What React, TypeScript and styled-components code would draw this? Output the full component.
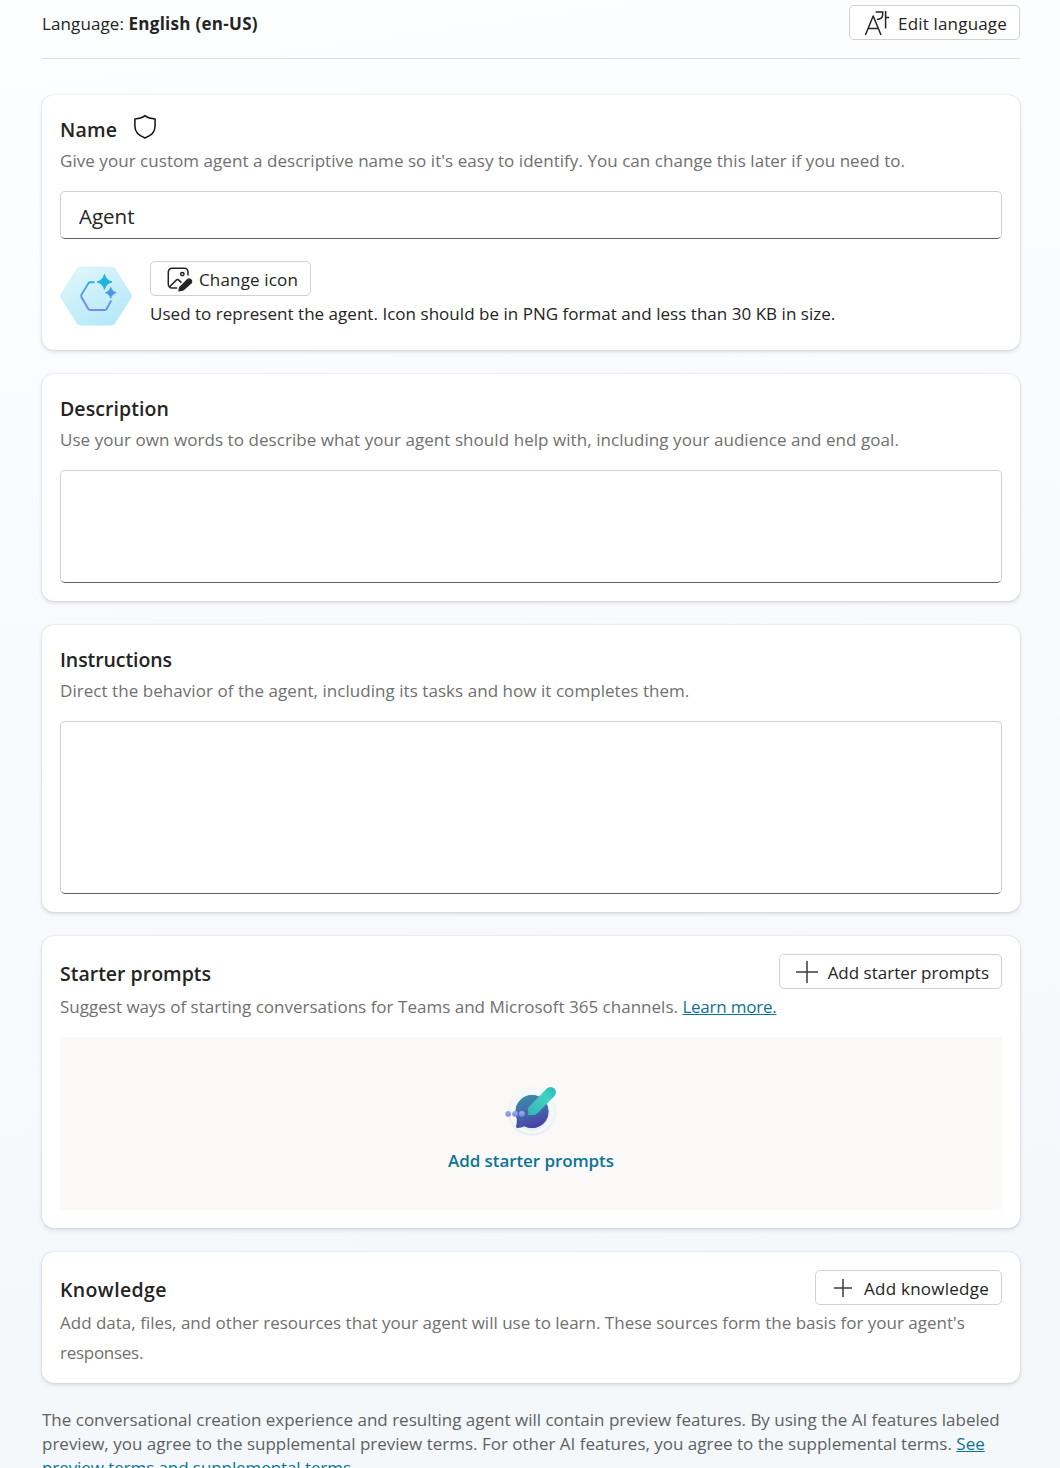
import React from "react";
import styled, { createGlobalStyle } from "styled-components";

const GlobalStyle = createGlobalStyle`
  *, *::before, *::after { box-sizing: border-box; }
  html, body { margin: 0; padding: 0; }
  body { overflow: hidden; }
`;

const Page = styled.main`
  height: 1468px;
  overflow: hidden;
  padding: 0 40px 0 42px;
  display: flex;
  flex-direction: column;
  background: linear-gradient(172deg, #fdfeff 0%, #fafbfe 30%, #f8f9fd 62%, #f4f8fb 85%, #f4f8fb 100%);
  color: #242424;
  font-family: "Open Sans", "Noto Sans", sans-serif;
  font-size: 17px;
`;

const LanguageBar = styled.header`
  flex: none;
  display: flex;
  justify-content: space-between;
  align-items: flex-start;
  height: 59px;
  padding-top: 5px;
  border-bottom: 1px solid #dcdde0;
`;

const LanguageLabel = styled.div`
  line-height: 38px;
  letter-spacing: 0.1px;
  white-space: pre;
`;

const Strong = styled.b`
  font-weight: 700;
  letter-spacing: 0.28px;
`;

const Button = styled.button<{ $padLeft: number; $gap: number; $spacing?: number }>`
  display: inline-flex;
  align-items: center;
  flex: none;
  gap: ${(p) => p.$gap}px;
  height: 35px;
  padding: 0 12px 0 ${(p) => p.$padLeft}px;
  border: 1px solid #d1d1d1;
  border-radius: 5px;
  background: #fff;
  color: #242424;
  font: inherit;
  letter-spacing: ${(p) => p.$spacing ?? 0}px;
  white-space: nowrap;

  svg { flex: none; display: block; }
`;

const ButtonText = styled.span`
  padding-top: 2px;
  line-height: 31px;
`;

const Cards = styled.div`
  flex: none;
  display: flex;
  flex-direction: column;
  gap: 24px;
  margin-top: 36px;
`;

const Card = styled.section<{ $bottom?: number }>`
  padding: 18px 18px ${(p) => p.$bottom ?? 18}px;
  border-radius: 12px;
  background: #fff;
  box-shadow: 0 0 2px rgba(0, 0, 0, 0.14), 0 2px 4px rgba(0, 0, 0, 0.12);
`;

const TitleRow = styled.div`
  display: flex;
  align-items: flex-start;
  height: 32px;
  gap: 16px;

  > svg { margin-top: 1px; }
`;

const ActionTitleRow = styled(TitleRow)`
  height: 37px;
  justify-content: space-between;
`;

const Title = styled.h2<{ $spacing?: number; $offset?: number }>`
  margin: ${(p) => p.$offset ?? 1}px 0 0;
  font-size: 19.5px;
  font-weight: 600;
  line-height: 32px;
  letter-spacing: ${(p) => p.$spacing ?? 0}px;
`;

const Hint = styled.p<{ $spacing?: number }>`
  margin: 0;
  color: #707070;
  line-height: 31px;
  letter-spacing: ${(p) => p.$spacing ?? 0}px;
  white-space: nowrap;
`;

const MultiHint = styled(Hint)`
  padding-top: 1px;
  line-height: 30px;
`;

const Tight = styled.span<{ $spacing: number }>`
  letter-spacing: ${(p) => p.$spacing}px;
`;

const Link = styled.a`
  color: #0b7495;
  text-decoration: underline;
  text-decoration-thickness: 1px;
  text-underline-offset: 1px;
`;

const fieldStyles = `
  display: block;
  width: 100%;
  margin: 15px 0 0;
  border: 1px solid #d1d1d1;
  border-bottom-color: #616161;
  border-radius: 5px;
  background: #fff;
  color: #242424;
  outline: none;
`;

const TextInput = styled.input`
  ${fieldStyles}
  height: 48px;
  padding: 2px 18px 0;
  font-family: inherit;
  font-size: 20.5px;
`;

const TextBox = styled.textarea<{ $height: number }>`
  ${fieldStyles}
  height: ${(p) => p.$height}px;
  resize: none;
`;

const IconRow = styled.div`
  display: flex;
  gap: 18px;
  height: 71px;
  margin-top: 22px;

  > svg { flex: none; margin-top: 4px; }
`;

const IconDetails = styled.div`
  display: flex;
  flex-direction: column;
  align-items: flex-start;
`;

const IconNote = styled.p`
  margin: 2px 0 0;
  line-height: 31px;
  letter-spacing: 0.03px;
  white-space: nowrap;
`;

const EmptyState = styled.div`
  display: flex;
  flex-direction: column;
  align-items: center;
  height: 173px;
  margin-top: 15px;
  padding-top: 43px;
  background: #faf9f8;
`;

const EmptyAction = styled.a`
  margin-top: 13px;
  color: #0b7495;
  font-weight: 600;
  line-height: 24px;
  letter-spacing: -0.08px;
`;

const Terms = styled.p`
  flex: none;
  margin: 25px 0 0;
  color: #616161;
  line-height: 24px;
  white-space: nowrap;
`;

const LanguageIcon = () => (
  <svg width="26" height="26" viewBox="0 0 26 26" fill="none" stroke="#242424" strokeWidth="1.5">
    <path d="M1.4 25 9.2 6 17 25M4.2 18.6H14.2" strokeLinejoin="round" />
    <path d="M11.6 2.1H18.7V4.6C18.7 7.6 16.3 9.3 13 9.6M21.6 1V18.6M21.6 7.6H25.2" />
  </svg>
);

const ShieldIcon = () => (
  <svg width="24" height="25" viewBox="0 0 24 25" fill="none" stroke="#111" strokeWidth="1.5" strokeLinejoin="round">
    <path d="M12 1.6C14.8 3.8 18.2 4.7 22.1 4.9V12.1C22.1 17.7 18.6 21.7 12 24 5.4 21.7 1.9 17.7 1.9 12.1V4.9C5.8 4.7 9.2 3.8 12 1.6Z" />
  </svg>
);

const ImageEditIcon = () => (
  <svg width="26" height="26" viewBox="0 -1 26 26" fill="none" stroke="#242424" strokeWidth="1.5">
    <path d="M21 8.6V5A3.7 3.7 0 0 0 17.3 1.3H5A3.7 3.7 0 0 0 1.3 5V17.3A3.7 3.7 0 0 0 5 21H10.2" />
    <path d="M2.6 19.8 9.3 13.1A1.8 1.8 0 0 1 11.8 13.1L14.4 15.6" />
    <circle cx="15.3" cy="7.1" r="1.7" />
    <path d="M11.8 24 12.6 20.4 20.6 12.4A2.6 2.6 0 0 1 24.2 16L16.2 23Z" fill="#242424" strokeWidth="1.1" strokeLinejoin="round" />
  </svg>
);

const PlusIcon = ({ size }: { size: number }) => (
  <svg width={size} height={size} viewBox={`0 0 ${size} ${size}`} stroke="#3b3b3b" strokeWidth="1.5">
    <path d={`M0 ${size / 2}H${size}M${size / 2} 0V${size}`} />
  </svg>
);

const AgentIcon = () => (
  <svg width="72" height="62" viewBox="0 0 72 62">
    <defs>
      <linearGradient id="hexFill" x1="0.2" y1="0" x2="0.8" y2="1">
        <stop offset="0" stopColor="#dff6fc" />
        <stop offset="1" stopColor="#b3e8f8" />
      </linearGradient>
      <linearGradient id="hexLine" gradientUnits="userSpaceOnUse" x1="36" y1="13" x2="36" y2="47">
        <stop offset="0" stopColor="#22b8dc" />
        <stop offset="0.5" stopColor="#4f9be6" />
        <stop offset="1" stopColor="#7e86ea" />
      </linearGradient>
    </defs>
    <path d="M20.8 1.4H51.2Q53.8 1.4 55.2 3.6L71.2 28.8Q72.4 31 71.2 33.2L55.2 58.2Q53.8 60.4 51.2 60.4H20.8Q18.2 60.4 16.8 58.2L.8 33.2Q-.4 31 .8 28.8L16.8 3.6Q18.2 1.4 20.8 1.4Z" fill="url(#hexFill)" />
    <path d="M34.6 17.2H30.2Q29 17.2 28.4 18.2L21.5 29.6Q20.8 30.9 21.5 32.2L28.2 43.8Q28.9 45 30.2 45H44.8Q46.1 45 46.8 43.8L51.2 35.4" fill="none" stroke="url(#hexLine)" strokeWidth="1.9" />
    <path d="M44.5 9.4Q46 15.3 52 16.9 46 18.5 44.5 24.3 43 18.5 37 16.9 43 15.3 44.5 9.4Z" fill="#22b4e0" stroke="#22b4e0" strokeWidth="1" strokeLinejoin="round" />
    <path d="M50.8 22.2Q51.9 26.5 56.2 27.7 51.9 28.9 50.8 33.2 49.7 28.9 45.4 27.7 49.7 26.5 50.8 22.2Z" fill="#4c96e8" stroke="#4c96e8" strokeWidth=".7" strokeLinejoin="round" />
  </svg>
);

const PromptArt = () => (
  <svg width="60" height="56" viewBox="1 0 60 56">
    <defs>
      <linearGradient id="bubble" x1="0.3" y1="0" x2="0.6" y2="1">
        <stop offset="0" stopColor="#3d8ba8" />
        <stop offset="0.55" stopColor="#4266ab" />
        <stop offset="1" stopColor="#4a3da6" />
      </linearGradient>
      <linearGradient id="pen" x1="1" y1="0" x2="0" y2="1">
        <stop offset="0" stopColor="#2bb3b4" />
        <stop offset="0.35" stopColor="#3fd3c3" />
        <stop offset="1" stopColor="#35b3b5" />
      </linearGradient>
      <linearGradient id="dot" x1="0" y1="0" x2="0" y2="1">
        <stop offset="0" stopColor="#a0b0f6" />
        <stop offset="1" stopColor="#7f84e0" />
      </linearGradient>
      <filter id="soft" x="-20%" y="-20%" width="140%" height="150%">
        <feDropShadow dx="0" dy="1" stdDeviation="1.4" floodColor="#3a7f96" floodOpacity="0.2" />
      </filter>
    </defs>
    <circle cx="32" cy="31.2" r="22.4" fill="#f5f8f9" filter="url(#soft)" />
    <circle cx="32" cy="31.6" r="16.5" fill="url(#bubble)" filter="url(#soft)" />
    <path d="M15.8 33Q17.6 40.2 16.4 44.8Q15.2 47.6 17.4 47.9Q21 48 24.6 46.2L30 40 22 30Z" fill="#4653a8" />
    <circle cx="32" cy="31.6" r="16.3" fill="url(#bubble)" />
    <path d="M28.2 34.9V27.8L46.7 8.6A5.4 5.4 0 0 1 54.4 16.2L37 33.4Q35.4 34.9 33.4 34.9Z" fill="url(#pen)" stroke="#fff" strokeOpacity="0.12" strokeWidth="0.5" />
    <circle cx="8.2" cy="33.8" r="2.9" fill="url(#dot)" />
    <circle cx="15" cy="33.8" r="2.9" fill="url(#dot)" />
    <circle cx="21.8" cy="33.8" r="2.9" fill="url(#dot)" />
  </svg>
);

export default function App() {
  return (
    <>
      <GlobalStyle />
      <Page>
        <LanguageBar>
          <LanguageLabel>
            Language: <Strong>English (en-US)</Strong>
          </LanguageLabel>
          <Button $padLeft={14} $gap={8} $spacing={0.18}>
            <LanguageIcon />
            <ButtonText>Edit language</ButtonText>
          </Button>
        </LanguageBar>

        <Cards>
          <Card>
            <TitleRow>
              <Title $spacing={0.16}>Name</Title>
              <ShieldIcon />
            </TitleRow>
            <Hint $spacing={0.048}>
              Give your custom agent a descriptive name so it's easy to identify. You can change this later if you need to.
            </Hint>
            <TextInput defaultValue="Agent" />
            <IconRow>
              <AgentIcon />
              <IconDetails>
                <Button $padLeft={16} $gap={6} $spacing={0.16}>
                  <ImageEditIcon />
                  <ButtonText>Change icon</ButtonText>
                </Button>
                <IconNote>Used to represent the agent. Icon should be in PNG format and less than 30 KB in size.</IconNote>
              </IconDetails>
            </IconRow>
          </Card>

          <Card>
            <TitleRow>
              <Title $spacing={0.07}>Description</Title>
            </TitleRow>
            <Hint $spacing={0.059}>
              Use your own words to describe what your agent should help with, including your audience and end goal.
            </Hint>
            <TextBox $height={113} />
          </Card>

          <Card>
            <TitleRow>
              <Title $spacing={-0.08}>Instructions</Title>
            </TitleRow>
            <Hint $spacing={0.05}>Direct the behavior of the agent, including its tasks and how it completes them.</Hint>
            <TextBox $height={173} />
          </Card>

          <Card>
            <ActionTitleRow>
              <Title $offset={4}>Starter prompts</Title>
              <Button $padLeft={16} $gap={10}>
                <PlusIcon size={22} />
                <ButtonText>Add starter prompts</ButtonText>
              </Button>
            </ActionTitleRow>
            <Hint $spacing={0.012}>
              Suggest ways of starting conversations for Teams and Microsoft 365 channels.{" "}
              <Tight $spacing={-0.23}>
                <Link>Learn more.</Link>
              </Tight>
            </Hint>
            <EmptyState>
              <PromptArt />
              <EmptyAction>Add starter prompts</EmptyAction>
            </EmptyState>
          </Card>

          <Card $bottom={15}>
            <ActionTitleRow>
              <Title $spacing={0.38} $offset={4}>Knowledge</Title>
              <Button $padLeft={18} $gap={12} $spacing={0.25}>
                <PlusIcon size={18} />
                <ButtonText>Add knowledge</ButtonText>
              </Button>
            </ActionTitleRow>
            <MultiHint>
              Add data, files, and other resources that your agent will use to learn. These sources form the basis for your agent's
              <br />
              <Tight $spacing={-0.28}>responses.</Tight>
            </MultiHint>
          </Card>
        </Cards>

        <Terms>
          The conversational creation experience and resulting agent will contain preview features. By using the AI features labeled
          <br />
          <Tight $spacing={-0.006}>
            preview, you agree to the supplemental preview terms. For other AI features, you agree to the supplemental terms.
          </Tight>{" "}
          <Link>
            See
            <br />
            <Tight $spacing={-0.08}>preview terms and supplemental terms.</Tight>
          </Link>
        </Terms>
      </Page>
    </>
  );
}
